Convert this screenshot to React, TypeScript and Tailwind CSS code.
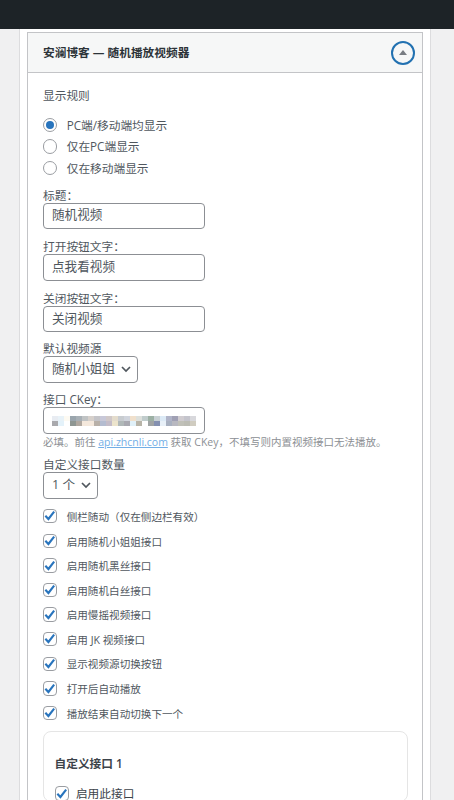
const FONT = '[font-family:"Open_Sans","Noto_Sans_CJK_SC",sans-serif]';

const CHECKS = [
  '侧栏随动（仅在侧边栏有效）',
  '启用随机小姐姐接口',
  '启用随机黑丝接口',
  '启用随机白丝接口',
  '启用慢摇视频接口',
  '启用 JK 视频接口',
  '显示视频源切换按钮',
  '打开后自动播放',
  '播放结束自动切换下一个',
];

// blurred-out key in the CKey field, two rows of blocks
const MOSAIC = [
  ['#e8ecf2', '#e8f2f8', '#fdfaf2', '#9aa5ad', '#a8b0b6', '#c0c3c4', '#d6d0cb', '#c4c4c8', '#c8c8d8', '#d0c8c8', '#e4dccc', '#c8ccd0', '#d0d4dc', '#f0e0cc', '#dde0dc', '#c0cccc', '#9cb0a4', '#c8d0d4', '#dceaf6', '#b0b4c8', '#a0a0b4', '#d0ccd0', '#c4c4cc', '#d8d8dc'],
  ['#a9a9ad', '#e4f2fa', '#ffffff', '#8e9692', '#b0a8a0', '#f4e8dc', '#f4e8dc', '#b8b0a8', '#b4bcd0', '#c4bcc8', '#ece4cc', '#b0b8b8', '#a8a8b0', '#e0f0f8', '#b8b4a8', '#ffffff', '#a0a4a4', '#8490b0', '#e8f0f8', '#a8b0c0', '#b8b8c0', '#c0c0b8', '#bcbcb4', '#d0ccc0'],
];

function CheckBox() {
  return (
    <span className="flex h-[14.4px] w-[14.4px] shrink-0 items-center justify-center rounded-[4px] border border-[#9a9da2] bg-white">
      <svg viewBox="0 0 12 12" className="h-[11.5px] w-[11.5px]">
        <path d="M1.4 6 4.6 9.4 10.6 1.6" fill="none" stroke="#2874bd" strokeWidth="2.2" />
      </svg>
    </span>
  );
}

function Radio({ checked, label }: { checked?: boolean; label: string }) {
  return (
    <div className="flex h-[21.5px] items-center">
      <span className="flex h-[14.4px] w-[14.4px] items-center justify-center rounded-full border border-[#9a9da2] bg-white">
        {checked && <span className="h-[8px] w-[8px] rounded-full bg-[#2874bd]" />}
      </span>
      <span className="ml-[9.8px] mt-[1px] text-[11.7px] leading-none text-[#50575e]">{label}</span>
    </div>
  );
}

function TextField({ label, value }: { label: string; value: string }) {
  return (
    <div>
      <div className="h-[15px] text-[11.7px] leading-[15px] text-[#50575e]">{label}</div>
      <div className="flex h-[26.6px] w-[162px] items-center rounded-[4px] border border-[#8c8f94] bg-white pl-[8px] text-[12.6px] text-[#50575e]">
        {value}
      </div>
    </div>
  );
}

function Chevron() {
  return (
    <svg viewBox="0 0 12 12" className="h-[12px] w-[12px] shrink-0">
      <path d="M2 4 6 8 10 4" fill="none" stroke="#50575e" strokeWidth="1.7" />
    </svg>
  );
}

export default function App() {
  return (
    <div className={`h-[800px] overflow-hidden bg-[#f0f0f1] ${FONT}`}>
      <div className="h-[29px] bg-[#1d2327]" />
      <div className="ml-[19px] h-[771px] w-[412px] border-x border-[#dcdcde] bg-white pl-[7px] pt-[3px]">
        <div className="w-[396px] border border-[#c3c4c7] bg-white">
          <div className="flex h-[40px] items-center justify-between border-b border-[#c3c4c7] bg-[#f6f7f7] pl-[15px] pr-[7px]">
            <h2 className="text-[11.7px] font-semibold text-[#2c3338]">安澜博客 — 随机播放视频器</h2>
            <span className="flex h-[24px] w-[24px] items-center justify-center rounded-full border-2 border-[#2271b1]">
              <span className="h-0 w-0 border-x-[4px] border-b-[5px] border-x-transparent border-b-[#787c82]" />
            </span>
          </div>

          <div className="pl-[14.5px] pt-[14.5px]">
            <div className="h-[15px] pl-[0.5px] text-[11.7px] leading-[15px] text-[#50575e]">显示规则</div>
            <div className="mt-[11.75px]">
              <Radio checked label="PC端/移动端均显示" />
              <Radio label="仅在PC端显示" />
              <Radio label="仅在移动端显示" />
            </div>

            <div className="ml-[0.5px] mt-[8.75px] flex flex-col gap-[10px]">
              <TextField label="标题：" value="随机视频" />
              <TextField label="打开按钮文字：" value="点我看视频" />
              <TextField label="关闭按钮文字：" value="关闭视频" />
            </div>

            <div className="ml-[0.5px] mt-[8.9px]">
              <div className="h-[15px] text-[11.7px] leading-[15px] text-[#50575e]">默认视频源</div>
              <div className="flex h-[26.6px] w-[95px] items-center justify-between rounded-[4px] border border-[#8c8f94] bg-white pl-[8px] pr-[5px] text-[12.6px] text-[#50575e]">
                随机小姐姐
                <Chevron />
              </div>
            </div>

            <div className="ml-[0.5px] mt-[9.7px]">
              <div className="h-[15px] text-[11.7px] leading-[15px] text-[#50575e]">接口 CKey：</div>
              <div className="flex h-[26.6px] w-[162px] items-center rounded-[4px] border border-[#8c8f94] bg-white pl-[8px]">
                <svg viewBox="0 0 144 10" className="h-[10px] w-[144px] blur-[0.7px]">
                  {MOSAIC.map((row, y) =>
                    row.map((color, x) => <rect key={`${x}-${y}`} x={x * 6} y={y * 5} width="6" height="5" fill={color} />),
                  )}
                </svg>
              </div>
              <p className="mt-[0.7px] h-[15px] whitespace-nowrap text-[10.5px] leading-[15px] text-[#8c8f94]">
                必填。前往 <span className="text-[#72aee6] underline">api.zhcnli.com</span> 获取 CKey，不填写则内置视频接口无法播放。
              </p>
            </div>

            <div className="ml-[0.5px] mt-[7.4px]">
              <div className="h-[15px] text-[11.7px] leading-[15px] text-[#50575e]">自定义接口数量</div>
              <div className="flex h-[26.6px] w-[55px] items-center justify-between rounded-[4px] border border-[#8c8f94] bg-white pl-[8px] pr-[5px] text-[12.6px] text-[#50575e]">
                1 个
                <Chevron />
              </div>
            </div>

            <div className="mt-[5.2px]">
              {CHECKS.map((label) => (
                <div key={label} className="flex h-[24.6px] items-center">
                  <CheckBox />
                  <span className="ml-[9.8px] mt-[2px] text-[10.6px] leading-none text-[#50575e]">{label}</span>
                </div>
              ))}
            </div>

            <div className="mt-[5.3px] w-[365.5px] rounded-[8px] border border-[#e5e5e5] bg-white pl-[11px] pt-[23.6px]">
              <h3 className="h-[16px] text-[11.7px] font-semibold leading-[16px] text-[#3c434a]">自定义接口 1</h3>
              <div className="mt-[15.2px] flex items-center">
                <CheckBox />
                <span className="ml-[7px] text-[11.7px] leading-none text-[#3c434a]">启用此接口</span>
              </div>
            </div>
          </div>
        </div>
      </div>
    </div>
  );
}
